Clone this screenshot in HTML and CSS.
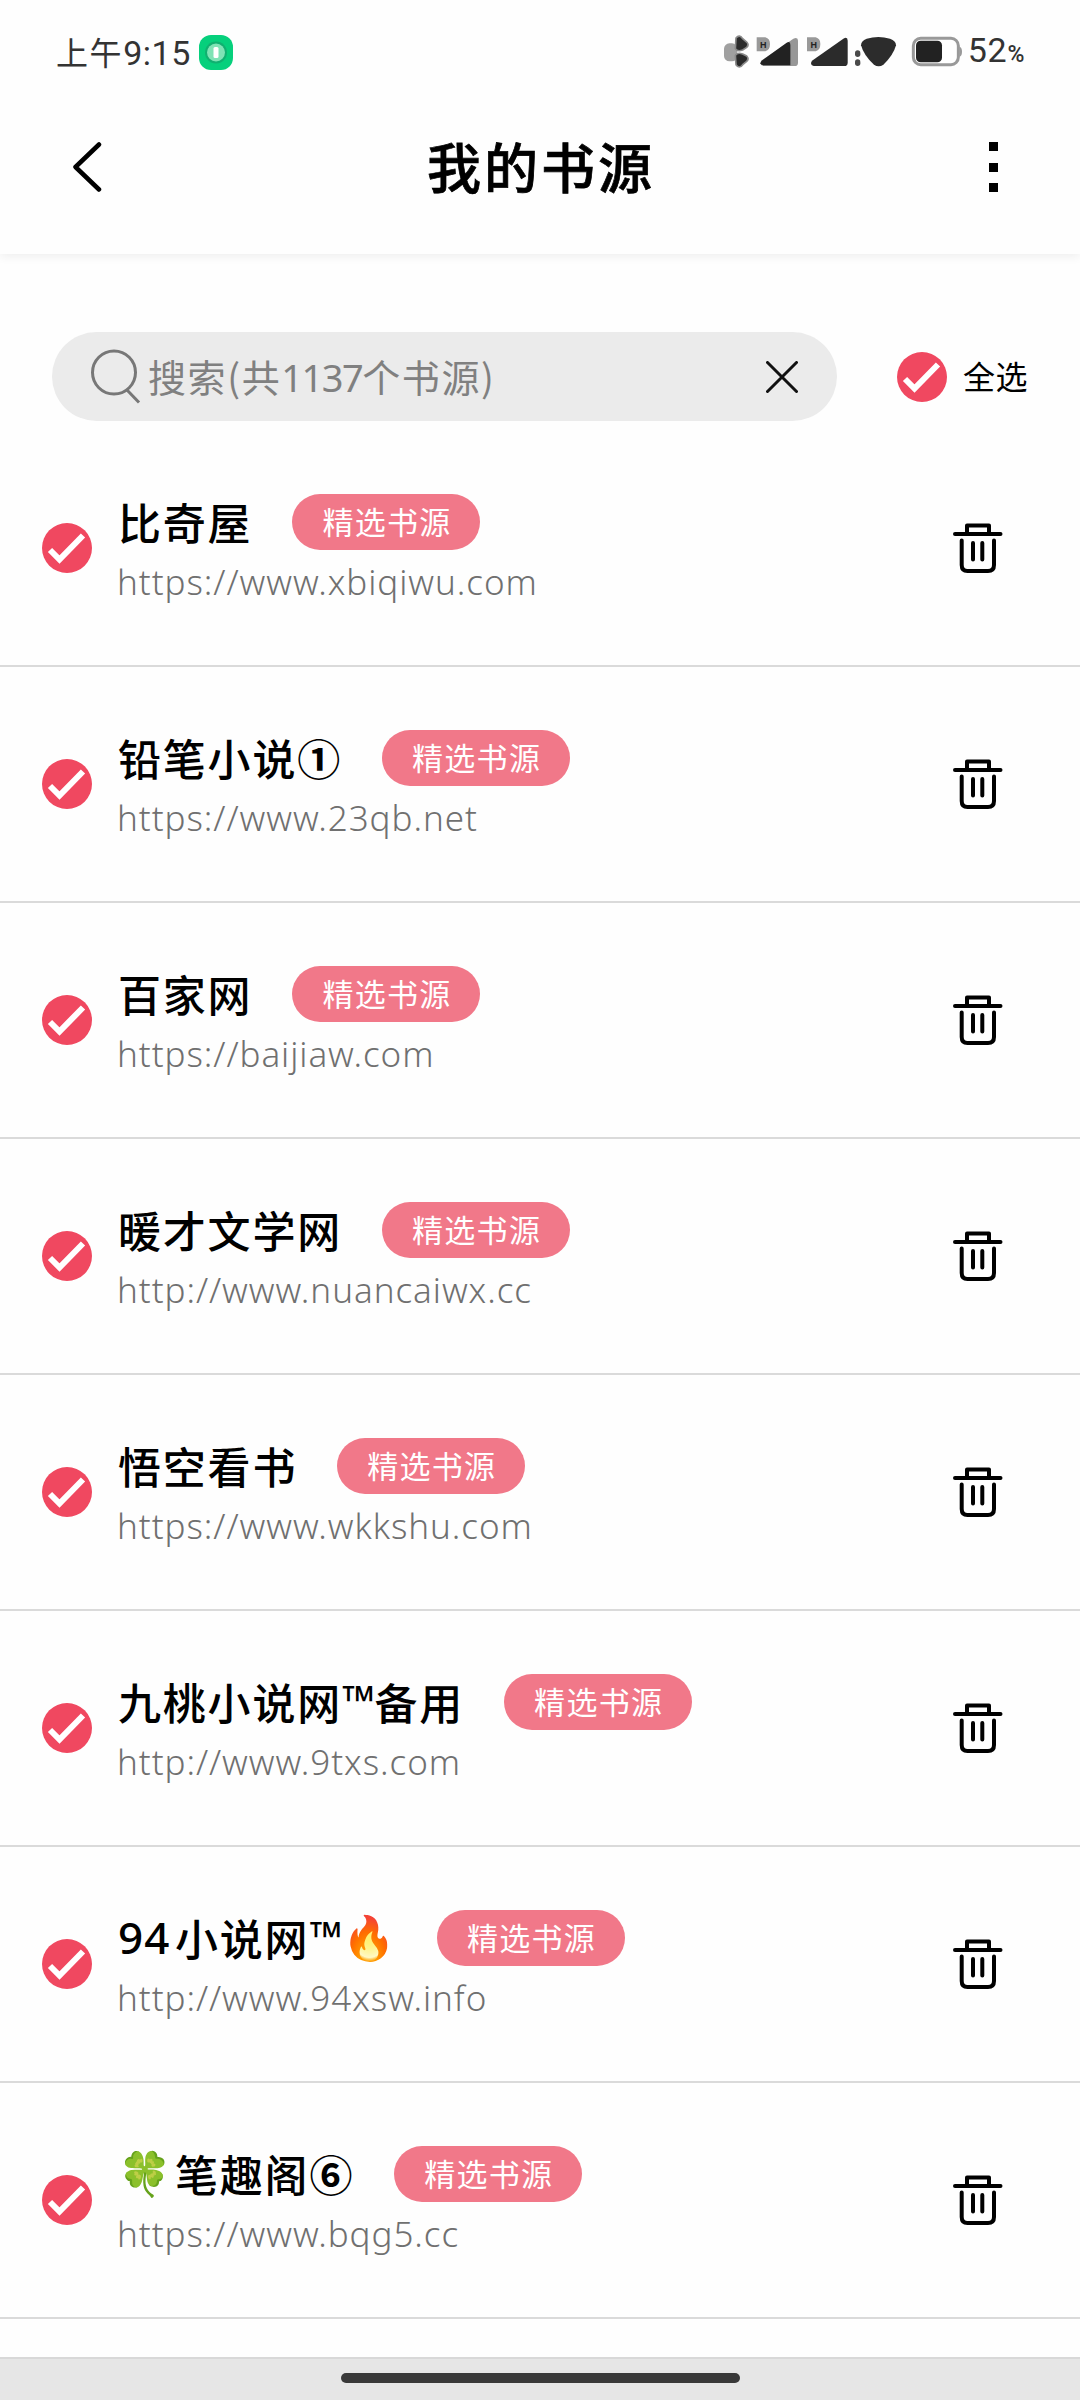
FILE: index.html
```html
<!DOCTYPE html>
<html lang="zh-CN">
<head>
<meta charset="utf-8">
<title>我的书源</title>
<link rel="stylesheet" href="styles.css">
</head>
<body>
<svg class="defs" width="0" height="0" aria-hidden="true">
  <symbol id="check" viewBox="0 0 50 50">
    <circle cx="25" cy="25" r="25" fill="#f04860"/>
    <path d="M8 27 17.500 36.500 41 12.500" fill="none" stroke="#fff" stroke-width="6"/>
  </symbol>
  <symbol id="trash" viewBox="0 0 50 50">
    <g fill="none" stroke="#000" stroke-width="4" stroke-linecap="round" stroke-linejoin="round">
      <path d="M2 11H47.500M14 11V2.500H36V11M8.700 17.500V42Q8.700 48 14.500 48H35Q41 48 41 42V17.500"/>
      <path d="M20 20V36.500M29.300 20V36.500"/>
    </g>
  </symbol>
</svg>
<div class="screen">
  <header class="top">
    <div class="status">
      <div class="clock">上午<span class="digits">9:15</span></div>
      <svg class="app-dot" viewBox="0 0 34 35"><rect width="34" height="35" rx="12" fill="#06d07c"/><circle cx="17" cy="17.500" r="11" fill="#10b070"/><circle cx="17" cy="17.500" r="9" fill="#7fe3b5"/><rect x="14.500" y="12" width="5" height="11" rx="1.500" fill="#fff"/></svg>
      <svg class="signals" viewBox="60 0 740 210">
        <rect x="72" y="70" width="40" height="54" rx="16" fill="#a0a0a0"/>
        <path d="M108 54Q118 42 128 56L140 66Q148 74 140 82L128 90Q112 96 106 86ZM108 134Q118 148 128 134L140 124Q148 116 140 108L128 102Q112 96 106 106Z" fill="#2b2b2b" stroke="#8a8a8a" stroke-width="5"/>
        <path d="M170 52H196Q210 56 210 72 210 90 196 94H170ZM321 52H347Q361 56 361 72 361 90 347 94H321Z" fill="#999"/>
        <text x="190" y="83" class="net">H</text><text x="341" y="83" class="net">H</text>
        <path d="M184 122 280 56Q294 50 294 62V128Q294 138 284 138H190Q176 134 184 122Z" fill="#979797"/>
        <path d="M185 122 260 68Q271 62 271 74V136H190Q176 134 185 122Z" fill="#222"/>
        <path d="M336 122 430 56Q443 49 443 62V128Q443 138 433 138H341Q328 134 336 122Z" fill="#2b2b2b"/>
        <rect x="465" y="91" width="16" height="20" rx="8" fill="#4a4a4a"/><rect x="465" y="118" width="16" height="20" rx="8" fill="#4a4a4a"/>
        <path d="M483 76Q483 62 500 56 535 46 570 56 588 62 588 76 580 106 550 134 536 144 522 134 492 108 483 76Z" fill="#2c2c2c"/>
        <rect x="640" y="55" width="135" height="79" rx="22" fill="#fff" stroke="#999" stroke-width="9"/>
        <rect x="648" y="62" width="78" height="65" rx="14" fill="#222"/>
        <path d="M778 80Q786 82 786 95 786 108 778 110Z" fill="#999"/>
      </svg>
      <div class="battery">52<small>%</small></div>
    </div>
    <div class="nav">
      <svg class="back" viewBox="0 0 30 50"><path d="M27 2.500 3.500 25 27 47.500" fill="none" stroke="#000" stroke-width="4.500" stroke-linecap="round" stroke-linejoin="round"/></svg>
      <h1 class="title">我的书源</h1>
      <div class="more"><i></i><i></i><i></i></div>
    </div>
  </header>
  <div class="tools">
    <div class="search">
      <svg class="lens" viewBox="0 0 50 55"><g fill="none" stroke="#777" stroke-width="3"><circle cx="23" cy="23.500" r="21.500"/><path d="M36 41 48 53.500"/></g></svg>
      <span class="hint">搜索(共<span class="num">1137</span>个书源)</span>
      <svg class="clear" viewBox="0 0 32 32"><path d="M1.500 1.500 30.500 30.500M30.500 1.500 1.500 30.500" stroke="#111" stroke-width="3" stroke-linecap="round"/></svg>
    </div>
    <svg class="check"><use href="#check"/></svg>
    <span class="all">全选</span>
  </div>
  <ul class="list">
    <li class="row"><svg class="check"><use href="#check"/></svg><div class="info"><div class="head"><span class="name">比奇屋</span><span class="badge">精选书源</span></div><div class="url">https://www.xbiqiwu.com</div></div><svg class="trash"><use href="#trash"/></svg></li>
    <li class="row"><svg class="check"><use href="#check"/></svg><div class="info"><div class="head"><span class="name">铅笔小说<span class="circled">①</span></span><span class="badge">精选书源</span></div><div class="url">https://www.23qb.net</div></div><svg class="trash"><use href="#trash"/></svg></li>
    <li class="row"><svg class="check"><use href="#check"/></svg><div class="info"><div class="head"><span class="name">百家网</span><span class="badge">精选书源</span></div><div class="url">https://baijiaw.com</div></div><svg class="trash"><use href="#trash"/></svg></li>
    <li class="row"><svg class="check"><use href="#check"/></svg><div class="info"><div class="head"><span class="name">暖才文学网</span><span class="badge">精选书源</span></div><div class="url">http://www.nuancaiwx.cc</div></div><svg class="trash"><use href="#trash"/></svg></li>
    <li class="row"><svg class="check"><use href="#check"/></svg><div class="info"><div class="head"><span class="name">悟空看书</span><span class="badge">精选书源</span></div><div class="url">https://www.wkkshu.com</div></div><svg class="trash"><use href="#trash"/></svg></li>
    <li class="row"><svg class="check"><use href="#check"/></svg><div class="info"><div class="head"><span class="name">九桃小说网<span class="tm">™</span>备用</span><span class="badge">精选书源</span></div><div class="url">http://www.9txs.com</div></div><svg class="trash"><use href="#trash"/></svg></li>
    <li class="row"><svg class="check"><use href="#check"/></svg><div class="info"><div class="head"><span class="name"><span class="latin">94</span>小说网<span class="tm">™</span><span class="emoji">🔥</span></span><span class="badge">精选书源</span></div><div class="url">http://www.94xsw.info</div></div><svg class="trash"><use href="#trash"/></svg></li>
    <li class="row"><svg class="check"><use href="#check"/></svg><div class="info"><div class="head"><span class="name"><span class="emoji lead">🍀</span>笔趣阁<span class="circled">⑥</span></span><span class="badge">精选书源</span></div><div class="url">https://www.bqg5.cc</div></div><svg class="trash"><use href="#trash"/></svg></li>
  </ul>
  <footer class="gesture"><div class="pill"></div></footer>
</div>
</body>
</html>
```
FILE: styles.css
```css
* { box-sizing: border-box; }
body { margin: 0; background: #fefefe; font-family: "Noto Sans CJK SC", sans-serif; color: #000; }
.defs { position: absolute; }
.screen { width: 1080px; height: 2400px; display: flex; flex-direction: column; overflow: hidden; white-space: nowrap; }
svg { flex: none; display: block; }

.top { height: 254px; flex: none; box-shadow: 0 2px 10px rgba(0, 0, 0, .07); }
.status { height: 104px; display: flex; align-items: center; padding-left: 56px; color: #333; }
.clock { width: 143px; font-size: 32px; letter-spacing: 1.6px; line-height: 40px; }
.digits { font-family: Roboto, sans-serif; font-size: 34px; letter-spacing: .5px; }
.app-dot { width: 34px; height: 35px; }
.signals { width: 246.700px; height: 70px; margin-left: 487px; margin-top: 6px; }
.net { font: bold 27px "Liberation Sans", sans-serif; text-anchor: middle; fill: #222; }
.battery { font: 34px/40px Roboto, sans-serif; margin-left: 1px; padding-top: 1px; letter-spacing: .8px; }
.battery small { font-size: 23px; font-weight: 500; letter-spacing: 0; }
.nav { height: 126px; display: flex; align-items: center; justify-content: space-between; padding: 0 82px 0 72px; }
.back { width: 30px; height: 50px; margin-right: -9px; }
.title { margin: 0; font-size: 54px; font-weight: 500; -webkit-text-stroke: .7px #000; letter-spacing: 3px; line-height: 70px; padding-bottom: 2px; }
.more { height: 50px; display: flex; flex-direction: column; justify-content: space-between; }
.more i { width: 9px; height: 9px; background: #000; }

.tools { height: 177px; flex: none; padding: 78px 0 0 52px; display: flex; align-items: flex-start; }
.search { width: 785px; height: 89px; border-radius: 45px; background: #ebebeb; display: flex; align-items: center; padding: 0 39px; }
.lens { width: 50px; height: 55px; }
.hint { flex: 1; margin-left: 7px; padding-bottom: 2px; font-size: 38px; letter-spacing: 1.600px; color: #808080; }
.num { font-family: "Noto Sans", sans-serif; letter-spacing: -1.500px; }
.clear { width: 32px; height: 32px; }
.check { width: 50px; height: 50px; }
.tools .check { margin: 20px 16px 0 60px; }
.all { font-size: 32px; line-height: 87px; letter-spacing: .5px; }

.list { flex: 1; margin: 0; padding: 0; list-style: none; }
.row { height: 236px; border-bottom: 2px solid #dadada; display: flex; align-items: center; padding: 0 77px 0 42px; }
.info { flex: 1; margin-left: 26px; height: 108px; }
.head { display: flex; align-items: center; gap: 40px; height: 56px; }
.name { display: flex; align-items: center; font-size: 43px; font-weight: 500; letter-spacing: 1.800px; line-height: 56px; padding-bottom: 3px; }
.circled { font-weight: 700; }
.tm { width: 32.500px; font-family: "Noto Sans", sans-serif; font-weight: 400; }
.latin { width: 57px; font-family: "Noto Sans", sans-serif; font-size: 44px; letter-spacing: 1px; }
.emoji { width: 55px; font-family: "Noto Color Emoji", sans-serif; letter-spacing: 0; padding-top: 3px; }
.emoji.lead { width: 57px; }
.badge { width: 188px; height: 56px; border-radius: 28px; background: #f17889; color: #fff; font-size: 31px; letter-spacing: 1.300px; line-height: 54px; padding-left: 30px; }
.url { font: 300 35px/44px "Noto Sans", sans-serif; letter-spacing: .950px; color: #707070; margin: 10px 0 0 -1px; }
.trash { width: 50px; height: 50px; }

.gesture { height: 43px; flex: none; background: #e6e6e6; border-top: 2px solid #d8d8d8; padding-top: 14px; }
.pill { width: 399px; height: 10px; border-radius: 5px; background: #393939; margin: 0 auto; }
```
